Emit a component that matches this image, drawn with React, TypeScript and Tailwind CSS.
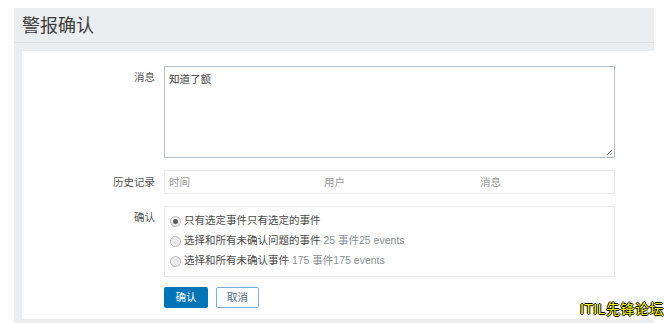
import React from "react";

const cjk = {
  fontFamily:
    '"Liberation Sans", Arial, "Noto Sans CJK SC", sans-serif',
};

const Radio: React.FC<{ checked?: boolean; children: React.ReactNode }> = ({
  checked,
  children,
}) => (
  <div className="flex items-center h-5 pl-[5px]">
    <span className="w-[11px] h-[11px] rounded-full border border-[#bdbdbd] bg-[#ececec] flex items-center justify-center">
      {checked && <span className="w-[5px] h-[5px] rounded-full bg-[#5a5a5a]" />}
    </span>
    <span className="ml-[3px] text-[10.5px] text-[#4b4b4b]">{children}</span>
  </div>
);

const App: React.FC = () => {
  return (
    <div
      className="relative w-[664px] h-[323px] bg-white overflow-hidden pt-2 pl-[14px]"
      style={cjk}
    >
      {/* gray panel */}
      <div className="w-[640px] h-[315px] bg-[#ebeef0] flex flex-col">
        <div className="h-[35px] border-b border-[#dde1e4] px-2 flex items-center">
          <h1 className="text-[18px] text-[#3a3a3a] leading-none mt-[2px]">
            警报确认
          </h1>
        </div>
        <div className="flex-1 pt-2 pl-2 pb-1">
          <div className="h-full bg-white pt-[15px]">
            {/* message */}
            <div className="flex">
              <div className="w-[133px] text-right text-[10.5px] text-[#555] pt-[4px]">
                消息
              </div>
              <div className="ml-[9px] w-[451px] h-[92px] border border-[#b4c0c8] px-[4px] pt-[5px] text-[10.5px] text-[#444] relative">
                知道了额
                <svg
                  className="absolute right-[1px] bottom-[1px]"
                  width="7"
                  height="7"
                  viewBox="0 0 7 7"
                >
                  <path d="M6 1 L1 6 M6 4 L4 6" stroke="#999" strokeWidth="1" />
                </svg>
              </div>
            </div>
            {/* history */}
            <div className="flex mt-3">
              <div className="w-[133px] text-right text-[10.5px] text-[#555] leading-[24px]">
                历史记录
              </div>
              <div className="ml-[9px] w-[451px] h-[24px] border border-[#ececec] flex text-[10.5px] text-[#9a9a9a] leading-[22px]">
                <span className="w-[155px] pl-[4px]">时间</span>
                <span className="w-[156px] pl-[4px]">用户</span>
                <span className="pl-[4px]">消息</span>
              </div>
            </div>
            {/* acknowledge */}
            <div className="flex mt-[12px]">
              <div className="w-[133px] text-right text-[10.5px] text-[#555] pt-[4px]">
                确认
              </div>
              <div className="ml-[9px] w-[451px] h-[71px] border border-[#ececec] pt-[4px]">
                <Radio checked>只有选定事件只有选定的事件</Radio>
                <Radio>
                  选择和所有未确认问题的事件{" "}
                  <span className="text-[#8a8f94]">25 事件25 events</span>
                </Radio>
                <Radio>
                  选择和所有未确认事件{" "}
                  <span className="text-[#8a8f94]">175 事件175 events</span>
                </Radio>
              </div>
            </div>
            {/* buttons */}
            <div className="flex mt-[10px] pl-[142px] gap-2">
              <button className="w-[44px] h-[21px] bg-[#0275b8] text-white text-[10.5px] rounded-[2px]">
                确认
              </button>
              <button className="w-[43px] h-[21px] bg-white border border-[#78b0d8] text-[#4a6b85] text-[10.5px] rounded-[2px]">
                取消
              </button>
            </div>
          </div>
        </div>
      </div>
      {/* watermark */}
      <div
        className="absolute right-0 top-[302px] text-[14px] text-[#ffff00] leading-none tracking-[0.5px]"
        style={{
          textShadow:
            "1px 0 0 #000, -1px 0 0 #000, 0 1px 0 #000, 0 -1px 0 #000",
        }}
      >
        ITIL先锋论坛
      </div>
    </div>
  );
};

export default App;
